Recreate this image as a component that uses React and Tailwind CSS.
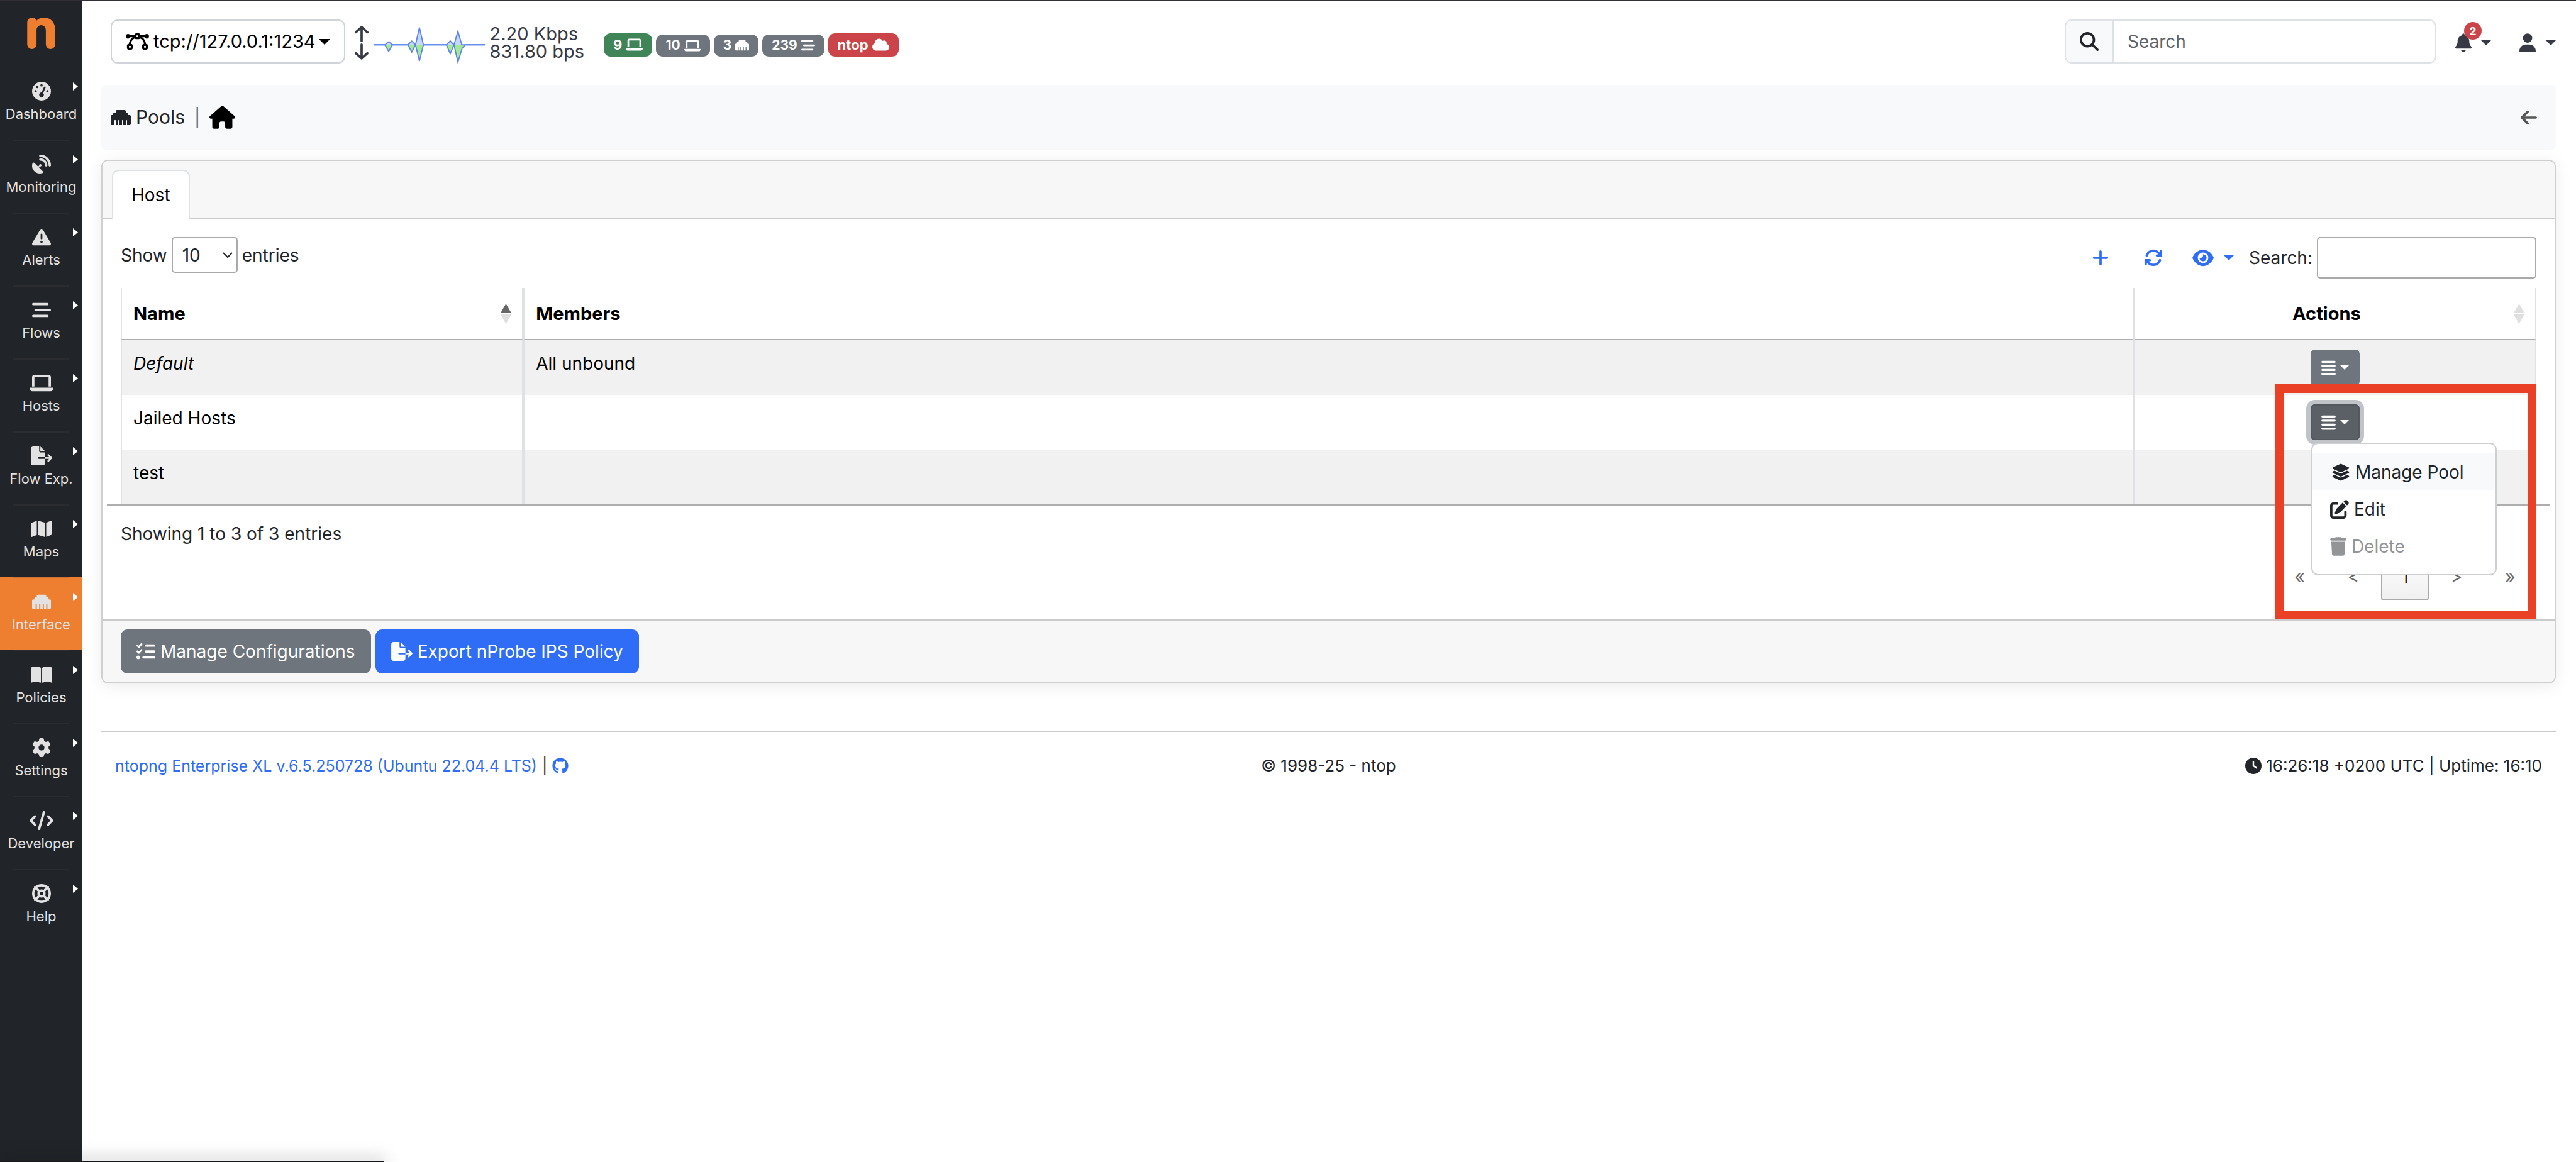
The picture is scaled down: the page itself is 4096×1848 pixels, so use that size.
import {
  FaGaugeHigh,
  FaSatelliteDish,
  FaTriangleExclamation,
  FaBarsStaggered,
  FaLaptop,
  FaFileExport,
  FaMap,
  FaEthernet,
  FaBookOpen,
  FaGear,
  FaCode,
  FaLifeRing,
  FaBezierCurve,
  FaCloud,
  FaMagnifyingGlass,
  FaBell,
  FaUser,
  FaHouse,
  FaArrowLeft,
  FaPlus,
  FaArrowsRotate,
  FaEye,
  FaAlignJustify,
  FaLayerGroup,
  FaPenToSquare,
  FaTrash,
  FaListCheck,
  FaGithub,
  FaClock,
} from "react-icons/fa6";

const NAV = [
  ["Dashboard", FaGaugeHigh],
  ["Monitoring", FaSatelliteDish],
  ["Alerts", FaTriangleExclamation],
  ["Flows", FaBarsStaggered],
  ["Hosts", FaLaptop],
  ["Flow Exp.", FaFileExport],
  ["Maps", FaMap],
  ["Interface", FaEthernet],
  ["Policies", FaBookOpen],
  ["Settings", FaGear],
  ["Developer", FaCode],
  ["Help", FaLifeRing],
];

const ROWS = [
  { name: "Default", italic: true, members: "All unbound" },
  { name: "Jailed Hosts", members: "", open: true },
  { name: "test", members: "" },
];

function Caret({ className }) {
  return (
    <svg viewBox="0 0 18 9" className={className} fill="currentColor" aria-hidden="true">
      <path d="M0 0H18L9 9Z" />
    </svg>
  );
}

function Sidebar() {
  return (
    <nav className="flex w-[131px] shrink-0 flex-col bg-[#212529] text-[#e2e2e2]">
      <a href="#home" aria-label="ntopng" className="flex h-[104px] justify-center pt-[26px]">
        <svg viewBox="0 0 48 54" className="h-[50px] w-[45px]" fill="#ee7f30" aria-hidden="true">
          <path d="M0 8a8 8 0 0 1 8-8c4 0 7 2 8 5 3-3 7-5 13-5 12 0 19 9 19 20v26a8 8 0 0 1-16 0V22c0-5-3-9-8-9s-8 4-8 9v24a8 8 0 0 1-16 0Z" />
        </svg>
      </a>
      {NAV.map(([label, Icon], i) => (
        <a
          key={label}
          href={"#" + label}
          className={
            "relative flex h-[116px] flex-col items-center " +
            (label === "Interface" ? "bg-[#ee7f30]" : "")
          }
        >
          <span
            className={
              "h-[2px] w-[89px] " + (i === 0 ? "bg-transparent" : "bg-[rgba(80,75,75,0.22)]")
            }
          />
          <Icon className="mt-[22px] h-[30px] w-[38px]" />
          <span className="mt-[6px] text-[22px] leading-[30px] whitespace-nowrap">{label}</span>
          <svg
            viewBox="0 0 8 13"
            className="absolute top-[25px] right-[7px] h-[13px] w-[8px]"
            fill="#fff"
            aria-hidden="true"
          >
            <path d="M0 0L8 6.5L0 13Z" />
          </svg>
        </a>
      ))}
    </nav>
  );
}

function Traffic() {
  const up =
    "M641 77H660.5L667 71.7L673.5 77H700L706.5 70.7L713 77L719.7 47.3L726.5 77H766L772.5 70.3L779 77L785.7 53.7L792.4 77H832";
  const down =
    "M641 77H660.5L667 88.3L673.5 77H700L706.5 89.3L713 77L719.7 104.7L726.5 77H766L772.5 92.3L779 77L785.7 106.7L793 82.7L798.3 77H832";
  return (
    <>
      <svg
        viewBox="608 43 26 60"
        className="ml-[14px] h-[56px] w-[24px]"
        fill="none"
        stroke="#373a44"
        strokeWidth="4"
        strokeLinecap="round"
        strokeLinejoin="round"
        aria-hidden="true"
      >
        <path d="M621 70V46.5M611 55L621 46L631 55M621 76V99.500M611 91L621 100L631 91" />
      </svg>
      <svg viewBox="640 38 193 71" className="ml-[6px] h-[66px] w-[179px]" aria-hidden="true">
        <path d={up} fill="#c9d8f8" />
        <path d={down} fill="#a4ea92" />
        <path d={up} fill="none" stroke="#5b86ee" strokeWidth="2" />
        <path d={down} fill="none" stroke="#5b86ee" strokeWidth="2" />
      </svg>
    </>
  );
}

function Badge({ children, icon: Icon, size, tone, big }) {
  return (
    <a
      href="#status"
      className={
        "flex items-center gap-[6px] rounded-[11px] px-[15px] font-bold text-white " +
        (big ? "h-[37px] text-[22px] " : "h-[35px] text-[21px] ") +
        tone
      }
    >
      {children}
      <Icon className={size} />
    </a>
  );
}

function TopBar() {
  return (
    <header className="mt-[29px] mb-[34px] flex h-[70px] items-center pl-[15px]">
      <button className="flex h-[70px] items-center rounded-[11px] border-2 border-[#ced4da] px-[22px] text-[29px] text-black">
        <FaBezierCurve className="h-[30px] w-[37px]" />
        <span className="ml-[7px]">tcp://127.0.0.1:1234</span>
        <Caret className="ml-[5px] h-[9px] w-[18px]" />
      </button>
      <div className="flex items-center pt-[4px]">
        <Traffic />
        <div className="ml-[7px] text-[29px] leading-[28px] whitespace-nowrap text-[#373a44]">
          <div>2.20 Kbps</div>
          <div>831.80 bps</div>
        </div>
        <div className="ml-[31px] flex items-end gap-[6px] pt-[6px]">
          <Badge icon={FaLaptop} size="h-[22px] w-[27px]" tone="bg-[#408558]" big>
            9
          </Badge>
          <Badge icon={FaLaptop} size="h-[21px] w-[26px]" tone="bg-[#6e757d]">
            10
          </Badge>
          <Badge icon={FaEthernet} size="h-[22px] w-[22px]" tone="bg-[#6e757d]">
            3
          </Badge>
          <Badge icon={FaBarsStaggered} size="h-[22px] w-[22px]" tone="bg-[#6e757d]">
            239
          </Badge>
          <Badge icon={FaCloud} size="h-[22px] w-[27px]" tone="bg-[#ca444a]" big>
            ntop
          </Badge>
        </div>
      </div>
      <div className="ml-auto flex h-[70px] w-[591px] overflow-hidden rounded-[11px] border-2 border-[#dee2e6]">
        <label
          htmlFor="global-search"
          aria-label="Search"
          className="flex w-[76px] items-center justify-center border-r-2 border-[#dee2e6] bg-[#f8f9fb] text-[#212529]"
        >
          <FaMagnifyingGlass className="h-[30px] w-[30px]" />
        </label>
        <input
          id="global-search"
          placeholder="Search"
          className="min-w-0 flex-1 px-[22px] text-[28px] outline-none placeholder:text-[#5f6368]"
        />
      </div>
      <button
        aria-label="Notifications"
        className="relative ml-[30px] flex items-center pt-[4px] text-[#373a44]"
      >
        <FaBell className="h-[30px] w-[26px]" />
        <Caret className="ml-[15px] h-[8px] w-[16px]" />
        <span className="absolute -top-[14px] left-[14px] flex h-[28px] w-[28px] items-center justify-center rounded-full bg-[#ca444a] text-[18px] font-bold text-white">
          2
        </span>
      </button>
      <button aria-label="User" className="ml-[45px] flex items-center pt-[4px] text-[#373a44]">
        <FaUser className="h-[30px] w-[26px]" />
        <Caret className="ml-[16px] h-[8px] w-[16px]" />
      </button>
    </header>
  );
}

function Sort({ active }) {
  return (
    <svg viewBox="0 0 15 32" className="h-[32px] w-[15px] shrink-0" aria-hidden="true">
      <path d="M7.500 0L15 13V15H0V13Z" fill={active ? "#666" : "#dfdfdf"} />
      <path d="M7.500 32L15 19V17H0V19Z" fill="#dfdfdf" />
    </svg>
  );
}

function ActionMenu() {
  return (
    <div
      role="menu"
      className="absolute top-full left-[1px] z-20 mt-[4px] w-[295px] rounded-[11px] border-2 border-[#cdcfd1] bg-white py-[15px] text-[28px] text-[#212529]"
    >
      <button role="menuitem" className="flex h-[59px] w-full items-center gap-[8px] bg-[#f8f9fb] pl-[30px]">
        <FaLayerGroup className="h-[30px] w-[30px]" />
        Manage Pool
      </button>
      <button role="menuitem" className="flex h-[59px] w-full items-center gap-[8px] pl-[28px]">
        <FaPenToSquare className="h-[30px] w-[30px]" />
        Edit
      </button>
      <button role="menuitem" disabled className="flex h-[59px] w-full items-center gap-[8px] pl-[28px] text-[#929497]">
        <FaTrash className="h-[30px] w-[26px]" />
        Delete
      </button>
    </div>
  );
}

function PoolTable() {
  const th = "h-[83px] border-x-2 border-b-2 border-x-[#dee2e6] border-b-[#aeaeae] px-[18px] py-0 font-bold";
  const td = "border-x-2 border-[#dee2e6] px-[18px] py-[15px] align-top leading-[44px]";
  return (
    <table className="w-full table-fixed border-separate border-spacing-0 text-[28px] text-black">
      <thead className="text-[29px]">
        <tr>
          <th className={th + " w-1/6"}>
            <div className="flex items-center justify-between">
              Name
              <Sort active />
            </div>
          </th>
          <th className={th + " w-4/6 text-left"}>Members</th>
          <th className={th + " w-1/6"}>
            <div className="flex items-center gap-[12px]">
              <span className="flex-1 text-center">Actions</span>
              <Sort />
            </div>
          </th>
        </tr>
      </thead>
      <tbody>
        {ROWS.map((row) => (
          <tr key={row.name} className="odd:bg-[#f1f1f1]">
            <td className={td + (row.italic ? " italic" : "")}>{row.name}</td>
            <td className={td}>{row.members}</td>
            <td className={td}>
              <div className="flex justify-center">
                <div className="relative">
                  <button
                    aria-label={"Actions for " + row.name}
                    className={
                      "flex h-[57px] w-[78px] items-center justify-center gap-[7px] rounded-[7px] text-white " +
                      (row.open
                        ? "bg-[#5b6067] shadow-[0_0_0_7px_#c0c4c8] ring-2 ring-[#53585e] ring-inset"
                        : "bg-[#6e757d]")
                    }
                  >
                    <FaAlignJustify className="h-[26px] w-[23px]" />
                    <Caret className="h-[7px] w-[14px]" />
                  </button>
                  {row.open && <ActionMenu />}
                </div>
              </div>
            </td>
          </tr>
        ))}
      </tbody>
    </table>
  );
}

function Pagination() {
  const side = "h-[76px] w-[83px]";
  const mid = "h-[76px] w-[76px]";
  return (
    <div className="mt-[9px] flex justify-end gap-[6px] text-[28px] text-[#666]">
      <button className={side}>«</button>
      <button className={mid}>&lt;</button>
      <button className={mid + " rounded-[4px] border-2 border-[#aaa] bg-linear-to-b from-white to-[#f0f0f0] text-[#212529]"}>
        1
      </button>
      <button className={mid}>&gt;</button>
      <button className={side}>»</button>
    </div>
  );
}

function PoolCard() {
  return (
    <section className="mt-[16px] rounded-[11px] border-2 border-[#d0d0d0] bg-white shadow-[0_4px_26px_rgba(0,0,0,0.08)]">
      <div className="flex rounded-t-[9px] border-b-2 border-[#cbcbcb] bg-[#f7f7f7] px-[15px] pt-[14px]">
        <button className="-mb-[2px] h-[78px] rounded-t-[11px] border-2 border-b-0 border-[#dee2e6] bg-white px-[29px] text-[28px] text-black">
          Host
        </button>
      </div>

      <div className="relative px-[29px] pt-[29px] pb-[30px] text-[28px] text-[#212529]">
        <div className="mb-[15px] flex items-center">
          <label className="flex items-center gap-[7px] self-start">
            Show
            <span className="relative">
              <select
                defaultValue="10"
                className="block h-[57px] w-[105px] appearance-none rounded-[5px] border-2 border-[#aaa] bg-white pl-[15px]"
              >
                <option>10</option>
                <option>25</option>
                <option>50</option>
              </select>
              <svg
                viewBox="0 0 16 10"
                className="pointer-events-none absolute top-[24px] right-[8px] h-[10px] w-[16px]"
                fill="none"
                stroke="#212529"
                strokeWidth="2"
                aria-hidden="true"
              >
                <path d="M1 1L8 8L15 1" />
              </svg>
            </span>
            entries
          </label>
          <div className="ml-auto flex items-center text-[#2f6df6]">
            <button aria-label="Add pool">
              <FaPlus className="h-[30px] w-[26px]" />
            </button>
            <button aria-label="Refresh" className="ml-[56px]">
              <FaArrowsRotate className="h-[30px] w-[30px]" />
            </button>
            <button aria-label="Visible columns" className="ml-[47px] flex items-center gap-[16px]">
              <FaEye className="h-[30px] w-[34px]" />
              <Caret className="h-[8px] w-[16px]" />
            </button>
          </div>
          <label htmlFor="table-search" className="mr-[7px] ml-[24px]">
            Search:
          </label>
          <input
            id="table-search"
            className="h-[66px] w-[349px] rounded-[5px] border-2 border-[#aaa] px-[15px] outline-none"
          />
        </div>

        <div className="-mx-[22px] border-b-2 border-[#aeaeae] px-[22px]">
          <PoolTable />
        </div>
        <p className="mt-[24px] leading-[42px]">Showing 1 to 3 of 3 entries</p>
        <Pagination />
        <div className="pointer-events-none absolute right-[29px] bottom-0 z-30 h-[374px] w-[416px] border-[14px] border-[#ea4025]" />
      </div>

      <div className="flex gap-[7px] rounded-b-[9px] border-t-2 border-[#cbcbcb] bg-[#f7f7f7] px-[29px] py-[14px] text-[28px] text-white">
        <button className="flex h-[70px] items-center gap-[8px] rounded-[11px] bg-[#6e757d] px-[25px]">
          <FaListCheck className="h-[30px] w-[30px]" />
          Manage Configurations
        </button>
        <button className="flex h-[70px] items-center gap-[8px] rounded-[11px] bg-[#2f6df6] px-[25px]">
          <FaFileExport className="h-[30px] w-[34px]" />
          Export nProbe IPS Policy
        </button>
      </div>
    </section>
  );
}

export default function App() {
  return (
    <div className="relative flex min-h-screen flex-col overflow-hidden bg-white font-[Inter,'Liberation_Sans',sans-serif]">
      <div className="h-[2px] bg-[#322f36]" />
      <div className="flex flex-1">
        <Sidebar />
        <main className="min-w-0 flex-1 pr-[32px] pl-[30px]">
          <TopBar />
          <div className="flex h-[103px] items-center rounded-[7px] bg-[#f8f9fb] pr-[30px] pl-[15px] text-[#212529]">
            <FaEthernet className="h-[32px] w-[32px]" />
            <h1 className="ml-[8px] text-[30px]">Pools</h1>
            <span className="mx-[15px] text-[28px] text-[#555]">|</span>
            <a href="#pools" aria-label="Home" className="text-black">
              <FaHouse className="h-[37px] w-[41px]" />
            </a>
            <button aria-label="Back" className="ml-auto text-[#555]">
              <FaArrowLeft className="h-[30px] w-[26px]" />
            </button>
          </div>
          <PoolCard />
          <footer className="mt-[75px] grid grid-cols-3 border-t-2 border-[#c9c9c9] px-[22px] pt-[36px] text-[26px] leading-[36px] text-[#212529]">
            <div className="flex items-center gap-[8px] text-[25px]">
              <a href="#about" className="whitespace-nowrap text-[#2f6df6]">
                ntopng Enterprise XL v.6.5.250728 (Ubuntu 22.04.4 LTS)
              </a>
              |
              <a href="#github" aria-label="GitHub" className="text-[#2f6df6]">
                <FaGithub className="h-[26px] w-[26px]" />
              </a>
            </div>
            <div className="text-center">© 1998-25 - ntop</div>
            <div className="flex items-center justify-end gap-[7px]">
              <FaClock className="h-[26px] w-[26px]" />
              16:26:18 +0200 UTC | Uptime: 16:10
            </div>
          </footer>
        </main>
      </div>
      <div className="absolute bottom-0 left-0 h-[2px] w-[611px] rounded-tr-[2px] bg-[#15171a] shadow-[0_0_24px_4px_rgba(0,0,0,0.25)]" />
    </div>
  );
}
